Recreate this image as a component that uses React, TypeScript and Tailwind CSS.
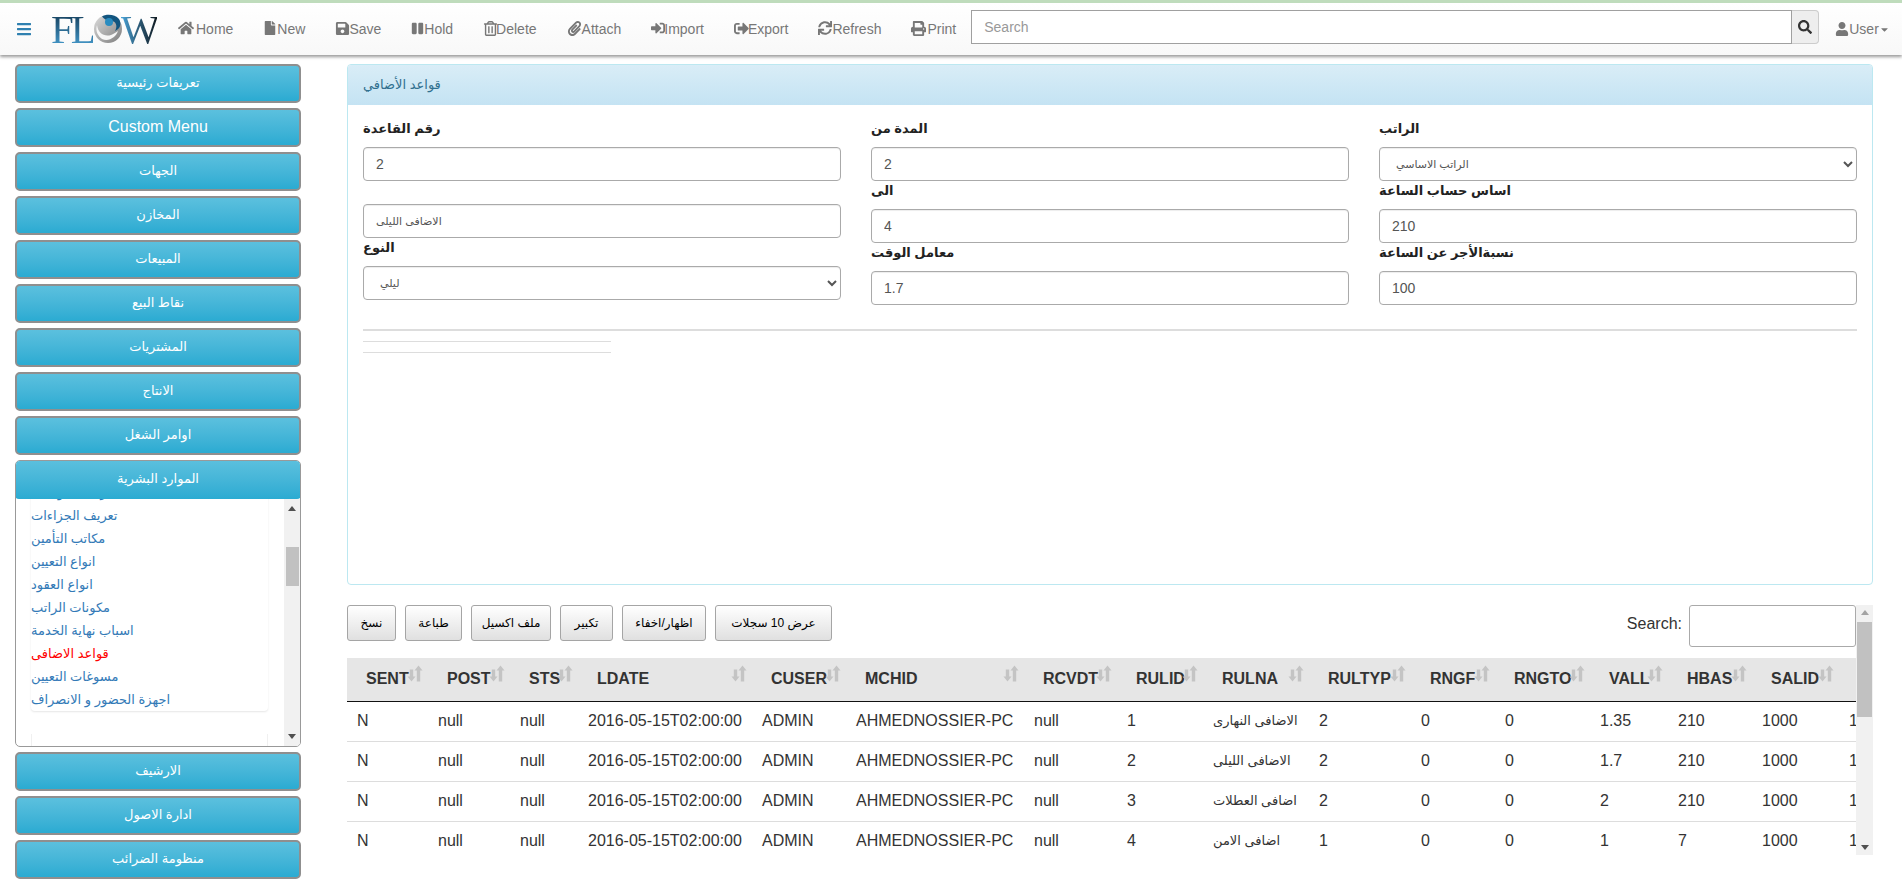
import {
  FaBars, FaFile, FaHome, FaPaperclip, FaPause, FaPrint, FaRegTrashAlt, FaSave,
  FaSearch, FaSignInAlt, FaSignOutAlt, FaSync, FaUser, FaCaretDown,
} from "react-icons/fa";

const navItems = [
  { label: "Home", icon: FaHome, box: "w-[18px]", size: 16 },
  { label: "New", icon: FaFile, box: "w-[14px]", size: 14 },
  { label: "Save", icon: FaSave, box: "w-[14px]", size: 15 },
  { label: "Hold", icon: FaPause, box: "w-[13px]", size: 13 },
  { label: "Delete", icon: FaRegTrashAlt, box: "w-[13px]", size: 15 },
  { label: "Attach", icon: FaPaperclip, box: "w-[15px]", size: 15 },
  { label: "Import", icon: FaSignInAlt, box: "w-[13px]", size: 14 },
  { label: "Export", icon: FaSignOutAlt, box: "w-[14px]", size: 15 },
  { label: "Refresh", icon: FaSync, box: "w-[14px]", size: 14 },
  { label: "Print", icon: FaPrint, box: "w-[16px]", size: 15 },
];

const menuTop = ["تعريفات رئيسية", "Custom Menu", "الجهات", "المخازن", "المبيعات", "نقاط البيع", "المشتريات", "الانتاج", "اوامر الشغل"];
const menuBottom = ["الارشيف", "ادارة الاصول", "منظومة الضرائب"];
const hrLinks = ["تعريف المؤهلات", "تعريف الجزاءات", "مكاتب التأمين", "انواع التعيين", "انواع العقود", "مكونات الراتب", "اسباب نهاية الخدمة", "قواعد الاضافى", "مسوغات التعيين", "اجهزة الحضور و الانصراف"];

const tools = [
  { label: "نسخ", w: "w-[49px]" },
  { label: "طباعة", w: "w-[57px]" },
  { label: "ملف اكسيل", w: "w-[80px]" },
  { label: "تكبير", w: "w-[53px]" },
  { label: "اظهار/اخفاء", w: "w-[84px]" },
  { label: "عرض 10 سجلات", w: "w-[117px]" },
];

const columns = [
  { name: "SENT", w: "w-[81px]" },
  { name: "POST", w: "w-[82px]" },
  { name: "STS", w: "w-[68px]" },
  { name: "LDATE", w: "w-[174px]" },
  { name: "CUSER", w: "w-[94px]" },
  { name: "MCHID", w: "w-[178px]" },
  { name: "RCVDT", w: "w-[93px]" },
  { name: "RULID", w: "w-[86px]" },
  { name: "RULNA", w: "w-[106px]" },
  { name: "RULTYP", w: "w-[102px]" },
  { name: "RNGF", w: "w-[84px]" },
  { name: "RNGTO", w: "w-[95px]" },
  { name: "VALL", w: "w-[78px]" },
  { name: "HBAS", w: "w-[84px]" },
  { name: "SALID", w: "w-[87px]" },
  { name: "", w: "w-[80px]" },
];

const rows = [
  ["1", "الاضافى النهارى", "2", "1.35", "210"],
  ["2", "الاضافى الليلى", "2", "1.7", "210"],
  ["3", "اضافى العطلات", "2", "2", "210"],
  ["4", "اضافى الامن", "1", "1", "7"],
];

function MenuButton({ label, flat }: { label: string; flat?: boolean }) {
  const latin = label === "Custom Menu";
  return (
    <div
      className={`h-[39px] pb-[2px] flex items-center justify-center text-white bg-gradient-to-b from-[#5bc0de] to-[#2aabd2] ${latin ? "text-base" : "text-[13px]"} ${flat ? "relative z-10 rounded-[4px] -mx-px -mt-px" : "rounded-[5px] border-2 border-[#8f8f8f]"}`}
    >
      {label}
    </div>
  );
}

function Logo() {
  return (
    <div className="ml-[19px] w-[106px] h-[32px] flex items-center text-[41px] leading-none [font-family:'Liberation_Serif',serif] tracking-[-3px]">
      <span className="bg-gradient-to-b from-[#10344e] to-[#4aa5da] bg-clip-text text-transparent">FL</span>
      <svg viewBox="0 0 30 30" className="w-[30px] h-[30px] shrink-0">
        <defs>
          <linearGradient id="sphere" x1="0" y1="0" x2="1" y2="1">
            <stop offset="0" stopColor="#dcdcdc" />
            <stop offset="1" stopColor="#7d7d7d" />
          </linearGradient>
        </defs>
        <circle cx="15" cy="15" r="14" fill="url(#sphere)" />
        <path d="M9 2.5C13 0 22 0 26 5 29 10 27 15 22 17 25 12 23 7 18 7 14 7 11 5 9 2.5Z" fill="#12557f" />
        <path d="M4 11C5 19 11 23 18 21 21 20 23 18 25 17 23 23 16 28 9 25 5 22 2 17 4 11Z" fill="#f6f6f6" />
        <circle cx="16" cy="8" r="4" fill="#2a8cc0" />
      </svg>
      <span className="-ml-[2px] bg-gradient-to-r from-[#4aa5da] to-[#0f1a22] bg-clip-text text-transparent">W</span>
    </div>
  );
}

function Navbar() {
  return (
    <header className="relative z-20 h-[55px] flex items-center border-t-[3px] border-[#bfdcbc] bg-gradient-to-b from-white to-[#f8f8f8] shadow-[0_2px_3px_rgba(0,0,0,0.4)] text-sm text-[#777]">
      <FaBars className="ml-4 text-[#2f80b0]" size={16} />
      <Logo />
      <nav className="ml-[6px] flex">
        {navItems.map(({ label, icon: Icon, box, size }) => (
          <a key={label} className="px-[15px] flex items-center">
            <span className={`${box} shrink-0 -mt-[2px]`}>
              <Icon size={size} />
            </span>
            {label}
          </a>
        ))}
      </nav>
      <div className="w-[848px] h-[34px] mb-[4px] flex">
        <input
          placeholder="Search"
          className="flex-1 h-full px-3 border border-[#a0a0a0] bg-white placeholder:text-[#999] outline-none"
        />
        <div className="w-[27px] h-full flex items-center justify-center bg-[#eee] border border-l-0 border-[#ccc] rounded-r-[4px] text-[#333]">
          <FaSearch size={14} />
        </div>
      </div>
      <div className="ml-4 flex items-center">
        <FaUser size={14} />
        User
        <FaCaretDown size={11} />
      </div>
    </header>
  );
}

function Triangle({ down, tone = "#505050" }: { down?: boolean; tone?: string }) {
  return (
    <svg viewBox="0 0 8 5" className="w-[8px] h-[5px]">
      <path d={down ? "M0 0h8L4 5Z" : "M0 5h8L4 0Z"} fill={tone} />
    </svg>
  );
}

function HrPanel() {
  return (
    <div className="h-[287px] flex flex-col rounded-[5px] border border-[#999] bg-white overflow-hidden">
      <MenuButton label="الموارد البشرية" flat />
      <div className="flex-1 flex min-h-0">
        <div className="flex-1 overflow-hidden pl-[15px] pr-[16px]">
          <ul className="-mt-[18px] rounded-[4px] shadow-[0_1px_2px_rgba(0,0,0,0.1)] text-[13px]">
            {hrLinks.map((item) => (
              <li
                key={item}
                className={`h-[23px] leading-[23px] ${item === "قواعد الاضافى" ? "text-[#ff0000]" : "text-[#337ab7]"}`}
              >
                {item}
              </li>
            ))}
          </ul>
          <div className="mt-[23px] h-[20px] border-x border-[#f0f0f0]" />
        </div>
        <div className="w-[16px] bg-[#f1f1f1] flex flex-col items-center py-[7px]">
          <Triangle />
          <div className="mt-[36px] w-[13px] h-[39px] bg-[#c1c1c1]" />
          <div className="flex-1" />
          <Triangle down />
        </div>
      </div>
    </div>
  );
}

function Sidebar() {
  return (
    <aside className="w-[286px] ml-[15px] shrink-0 flex flex-col gap-[5px]">
      {menuTop.map((m) => (
        <MenuButton key={m} label={m} />
      ))}
      <HrPanel />
      {menuBottom.map((m) => (
        <MenuButton key={m} label={m} />
      ))}
    </aside>
  );
}

const fieldClass =
  "w-full h-[34px] px-3 rounded-[4px] border border-[#aaa] bg-white text-[#555] outline-none shadow-[inset_0_1px_1px_rgba(0,0,0,0.075)]";

function Label({ children }: { children: string }) {
  return <label className="block h-5 leading-5 mb-2 text-[13px] font-bold text-[#222]">{children}</label>;
}

function FormPanel() {
  return (
    <section className="h-[521px] rounded-[4px] border border-[#bce8f1] bg-white">
      <div className="h-[40px] px-[15px] flex items-center rounded-t-[3px] bg-gradient-to-b from-[#d9edf7] to-[#c4e3f3] text-[13px] text-[#31708f]">
        قواعد الأضافي
      </div>
      <div className="px-[15px] pt-[14px]">
        <div className="grid grid-cols-3 gap-x-[30px]">
          <div>
            <Label>رقم القاعدة</Label>
            <input className={`${fieldClass} text-sm`} defaultValue="2" />
            <input className={`${fieldClass} mt-[23px] text-[11px]`} defaultValue="الاضافى الليلى" />
            <Label>النوع</Label>
            <select className={`${fieldClass} text-[11px]`} defaultValue="ليلي">
              <option>ليلي</option>
            </select>
          </div>
          <div>
            <Label>المدة من</Label>
            <input className={`${fieldClass} text-sm`} defaultValue="2" />
            <Label>الى</Label>
            <input className={`${fieldClass} text-sm`} defaultValue="4" />
            <Label>معامل الوقت</Label>
            <input className={`${fieldClass} text-sm`} defaultValue="1.7" />
          </div>
          <div>
            <Label>الراتب</Label>
            <select className={`${fieldClass} text-[11px]`} defaultValue="الراتب الاساسي">
              <option>الراتب الاساسي</option>
            </select>
            <Label>اساس حساب الساعة</Label>
            <input className={`${fieldClass} text-sm`} defaultValue="210" />
            <Label>نسبةالأجر عن الساعة</Label>
            <input className={`${fieldClass} text-sm`} defaultValue="100" />
          </div>
        </div>
        <div className="mt-[24px] h-[2px] bg-[#ddd]" />
        <div className="mt-[10px] w-[248px] h-px bg-[#ddd]" />
        <div className="mt-[10px] w-[248px] h-px bg-[#ddd]" />
      </div>
    </section>
  );
}

function SortIcon() {
  return (
    <svg viewBox="0 0 16 16" className="absolute right-[5px] top-[7px] w-4 h-[17px] text-[#c4c4c4]">
      <path d="M11.5 0 15.5 5h-2.3v11H9.8V5H7.5Z" fill="currentColor" />
      <path d="M2.8 4h3.4v7h2.3l-4 5-4-5h2.3Z" fill="currentColor" />
    </svg>
  );
}

function DataTable() {
  return (
    <div className="mt-5 h-[250px] flex">
      <div className="w-[1509px] overflow-hidden">
        <div className="h-[42px] flex justify-between">
          <div className="flex gap-[9px] h-[36px]">
            {tools.map((t) => (
              <button
                key={t.label}
                className={`${t.w} h-full rounded-[3px] border border-[#a5a5a5] bg-gradient-to-b from-white to-[#e0e0e0] text-xs text-black`}
              >
                {t.label}
              </button>
            ))}
          </div>
          <div className="flex items-start">
            <span className="mt-[7px] mr-[7px] text-base text-[#333]">Search:</span>
            <input className="w-[167px] h-[42px] rounded-[3px] border border-[#aaa] bg-white outline-none" />
          </div>
        </div>
        <table className="mt-[11px] w-[1572px] table-fixed text-base text-[#333]">
          <colgroup>
            {columns.map((c) => (
              <col key={c.name} className={c.w} />
            ))}
          </colgroup>
          <thead>
            <tr className="h-[43px] bg-[#e6e6e6] border-b border-[#111]">
              {columns.map((c) => (
                <th key={c.name} className="relative pl-[19px] text-left font-bold whitespace-nowrap">
                  {c.name}
                  {c.name && <SortIcon />}
                </th>
              ))}
            </tr>
          </thead>
          <tbody>
            {rows.map(([id, name, type, val, hbas]) => (
              <tr key={id} className="h-[40px] border-b border-[#ddd]">
                {["N", "null", "null", "2016-05-15T02:00:00", "ADMIN", "AHMEDNOSSIER-PC", "null", id, name, type, "0", "0", val, hbas, "1000", "1"].map(
                  (cell, i) => (
                    <td key={i} className={`pl-[10px] whitespace-nowrap ${i === 8 ? "text-[13px]" : ""}`}>
                      {cell}
                    </td>
                  ),
                )}
              </tr>
            ))}
          </tbody>
        </table>
      </div>
      <div className="w-[17px] bg-[#f1f1f1] flex flex-col items-center pt-[5px]">
        <Triangle tone="#a3a3a3" />
        <div className="mt-[7px] w-[15px] h-[95px] bg-[#c1c1c1]" />
        <div className="flex-1" />
        <div className="mb-[5px]">
          <Triangle down />
        </div>
      </div>
    </div>
  );
}

export default function App() {
  return (
    <div className="h-screen overflow-hidden bg-white [font-family:'Liberation_Sans','DejaVu_Sans',sans-serif]">
      <Navbar />
      <div className="flex pt-[9px]">
        <Sidebar />
        <main className="ml-[46px] w-[1526px]">
          <FormPanel />
          <DataTable />
        </main>
      </div>
    </div>
  );
}
